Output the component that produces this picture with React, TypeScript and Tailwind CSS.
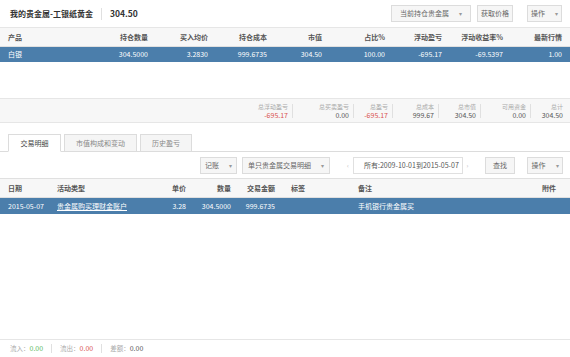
import React from "react";

const font = { fontFamily: '"Noto Sans CJK SC", "Liberation Sans", sans-serif' };

const Btn: React.FC<{ label: string; caret?: boolean; className?: string }> = ({
  label,
  caret,
  className = "",
}) => (
  <div
    className={`flex h-[17px] items-center justify-center gap-[10px] border border-[#dcdcdc] bg-[#f6f6f6] text-[7px] text-[#666] ${className}`}
  >
    <span>{label}</span>
    {caret && <span className="text-[6px] text-[#999]">▾</span>}
  </div>
);

const topCols = [
  { label: "持仓数量", value: "304.5000" },
  { label: "买入均价", value: "3.2830" },
  { label: "持仓成本", value: "999.6735" },
  { label: "市值", value: "304.50" },
  { label: "占比%", value: "100.00" },
  { label: "浮动盈亏", value: "-695.17" },
  { label: "浮动收益率%", value: "-69.5397" },
  { label: "最新行情", value: "1.00" },
];

const summary = [
  { label: "总浮动盈亏", value: "-695.17", red: true, w: "w-[48px]" },
  { label: "总买卖盈亏", value: "0.00", w: "w-[52px]" },
  { label: "总盈亏", value: "-695.17", red: true, w: "w-[30px]" },
  { label: "总成本", value: "999.67", w: "w-[37px]" },
  { label: "总市值", value: "304.50", w: "w-[33px]" },
  { label: "可用资金", value: "0.00", w: "w-[41px]" },
  { label: "总计", value: "304.50", w: "w-[28px]" },
];

const topGrid =
  "grid grid-cols-[100px_56px_60px_59px_55px_63px_57px_61px_1fr]";
const botGrid =
  "grid grid-cols-[57px_103px_26px_45px_44px_83px_1fr_40px]";

export default function App() {
  return (
    <div className="h-[357px] w-[570px] overflow-hidden bg-white text-[#333]" style={font}>
      {/* header */}
      <div className="flex h-[28px] items-center border-b border-[#e6e6e6]">
        <span className="pl-[10px] text-[8px] font-bold text-[#333]">我的贵金属-工银纸黄金</span>
        <span className="mx-[8px] h-[12px] border-l border-[#e0e0e0]" />
        <span className="text-[8.5px] font-bold text-[#333]">304.50</span>
        <div className="ml-auto flex items-center pr-[8px]">
          <Btn label="当前持仓贵金属" caret className="w-[80px]" />
          <Btn label="获取价格" className="ml-[6px] w-[36px]" />
          <Btn label="操作" caret className="ml-[14px] w-[35px]" />
        </div>
      </div>

      {/* top table */}
      <div className={`${topGrid} h-[19px] items-center border-b border-[#e0e0e0] bg-[#f7f7f7] text-[7px] font-bold text-[#555]`}>
        <div className="pl-[8px]">产品</div>
        {topCols.map((c) => (
          <div key={c.label} className="pr-[8px] text-right">
            {c.label}
          </div>
        ))}
      </div>
      <div className={`${topGrid} h-[15px] items-center bg-[#4b7eab] text-[7px] text-white`}>
        <div className="pl-[8px]">白银</div>
        {topCols.map((c) => (
          <div key={c.label} className="pr-[8px] text-right">
            {c.value}
          </div>
        ))}
      </div>

      <div className="h-[36px]" />

      {/* summary */}
      <div className="flex h-[25px] items-center justify-end border-y border-[#e6e6e6] bg-[#f7f7f7] pr-[7px]">
        {summary.map((s, i) => (
          <React.Fragment key={s.label}>
            {i > 0 && <span className="mx-[4px] h-[14px] border-l border-[#e0e0e0]" />}
            <div className={`flex flex-col items-end leading-[9px] ${s.w}`}>
              <span className="text-[6px] text-[#aaa]">{s.label}</span>
              <span className={`text-[7px] ${s.red ? "text-[#d9534f]" : "text-[#555]"}`}>{s.value}</span>
            </div>
          </React.Fragment>
        ))}
      </div>

      {/* tabs */}
      <div className="flex h-[29px] items-end gap-[3px] border-b border-[#dcdcdc] pl-[8px]">
        <div className="-mb-px flex h-[18px] w-[53px] items-center justify-center border border-b-white border-[#dcdcdc] bg-white text-[7px] text-[#444]">
          交易明细
        </div>
        <div className="flex h-[17px] w-[73px] items-center justify-center border border-b-0 border-[#dcdcdc] bg-[#f5f5f5] text-[7px] text-[#888]">
          市值构成和变动
        </div>
        <div className="flex h-[17px] w-[52px] items-center justify-center border border-b-0 border-[#dcdcdc] bg-[#f5f5f5] text-[7px] text-[#888]">
          历史盈亏
        </div>
      </div>

      {/* toolbar */}
      <div className="flex h-[26px] items-center pl-[200px]">
        <Btn label="记账" caret className="w-[37px]" />
        <Btn label="单只贵金属交易明细" caret className="ml-[5px] w-[88px]" />
        <div className="ml-[13px] flex h-[17px] items-center">
          <div className="flex h-[17px] w-[10px] items-center justify-center text-[6px] text-[#bbb]">‹</div>
          <div className="flex h-[17px] w-[110px] items-center border border-[#e0e0e0] bg-white pl-[10px] text-[7px] text-[#555]">
            所有:2009-10-01到2015-05-07
          </div>
          <div className="flex h-[17px] w-[9px] items-center justify-center text-[6px] text-[#bbb]">›</div>
        </div>
        <Btn label="查找" className="ml-[13px] w-[30px]" />
        <Btn label="操作" caret className="ml-[12px] w-[36px]" />
      </div>

      {/* bottom table */}
      <div className={`${botGrid} h-[20px] items-center border-y border-[#e0e0e0] bg-[#f7f7f7] text-[7px] font-bold text-[#555]`}>
        <div className="pl-[8px]">日期</div>
        <div>活动类型</div>
        <div className="text-right">单价</div>
        <div className="text-right">数量</div>
        <div className="text-right">交易金额</div>
        <div className="pl-[16px]">标签</div>
        <div>备注</div>
        <div className="pr-[14px] text-right">附件</div>
      </div>
      <div className={`${botGrid} h-[16px] items-center bg-[#4b7eab] text-[7px] text-white`}>
        <div className="pl-[8px]">2015-05-07</div>
        <div className="underline">贵金属购买理财金账户</div>
        <div className="text-right">3.28</div>
        <div className="text-right">304.5000</div>
        <div className="text-right">999.6735</div>
        <div />
        <div>手机银行贵金属买</div>
        <div />
      </div>

      <div className="h-[125px]" />

      {/* footer */}
      <div className="flex h-[18px] items-center border-t border-[#e6e6e6] pl-[10px] text-[6.5px] text-[#aaa]">
        <span>流入：</span>
        <span className="text-[7px] text-[#5cb85c]">0.00</span>
        <span className="mx-[8px] h-[9px] border-l border-[#e0e0e0]" />
        <span>流出：</span>
        <span className="text-[7px] text-[#d9534f]">0.00</span>
        <span className="mx-[8px] h-[9px] border-l border-[#e0e0e0]" />
        <span>差额：</span>
        <span className="text-[7px] text-[#555]">0.00</span>
      </div>
    </div>
  );
}
